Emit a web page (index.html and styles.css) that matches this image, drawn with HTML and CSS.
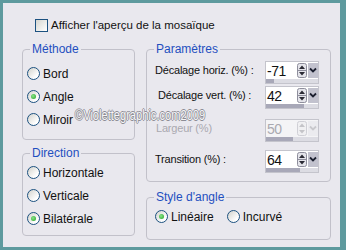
FILE: index.html
```html
<!DOCTYPE html>
<html lang="fr">
<head>
    <meta charset="utf-8">
    <title>Mosaïque</title>
    <link rel="stylesheet" href="styles.css">
</head>
<body>
<div class="dlg">
    <div class="preview"><span class="check"></span>Afficher l'aperçu de la mosaïque</div>

    <div class="cols">
        <div class="col">
            <fieldset class="box methode">
                <legend>Méthode</legend>
                <div class="opt"><span class="radio"></span>Bord</div>
                <div class="opt"><span class="radio on"></span>Angle</div>
                <div class="opt"><span class="radio"></span>Miroir</div>
            </fieldset>
            <fieldset class="box direction">
                <legend>Direction</legend>
                <div class="opt"><span class="radio"></span>Horizontale</div>
                <div class="opt"><span class="radio"></span>Verticale</div>
                <div class="opt"><span class="radio on"></span>Bilatérale</div>
            </fieldset>
        </div>

        <div class="col right">
            <fieldset class="box params">
                <legend>Paramètres</legend>
                <div class="row r1">
                    <span class="lbl">Décalage horiz. (%) :</span>
                    <div class="spin">
                        <div class="spin-top">
                            <span class="val">-71</span>
                            <svg class="ud" width="10" height="15" viewBox="0 0 10 15"><rect x="0.5" y="0.5" width="9" height="14" rx="2" fill="#e4e4ea" stroke="#8e8e9c"/><line x1="1" y1="7.5" x2="9" y2="7.5" stroke="#8e8e9c"/><path d="M2 6 L5 2.5 L8 6 Z" fill="#2a2a34"/><path d="M2 9 L5 12.5 L8 9 Z" fill="#2a2a34"/></svg>
                            <svg class="dd" width="10" height="15" viewBox="0 0 10 15"><rect width="10" height="15" fill="#c2c2ce"/><path d="M2 5.5 L5 8.5 L8 5.5" stroke="#1c2030" stroke-width="1.8" fill="none"/></svg>
                        </div>
                        <div class="bar"><div class="fill" style="width:15%"></div></div>
                    </div>
                </div>
                <div class="row r2">
                    <span class="lbl ind">Décalage vert. (%) :</span>
                    <div class="spin">
                        <div class="spin-top">
                            <span class="val">42</span>
                            <svg class="ud" width="10" height="15" viewBox="0 0 10 15"><rect x="0.5" y="0.5" width="9" height="14" rx="2" fill="#e4e4ea" stroke="#8e8e9c"/><line x1="1" y1="7.5" x2="9" y2="7.5" stroke="#8e8e9c"/><path d="M2 6 L5 2.5 L8 6 Z" fill="#2a2a34"/><path d="M2 9 L5 12.5 L8 9 Z" fill="#2a2a34"/></svg>
                            <svg class="dd" width="10" height="15" viewBox="0 0 10 15"><rect width="10" height="15" fill="#c2c2ce"/><path d="M2 5.5 L5 8.5 L8 5.5" stroke="#1c2030" stroke-width="1.8" fill="none"/></svg>
                        </div>
                        <div class="bar"><div class="fill" style="width:74%"></div></div>
                    </div>
                </div>
                <div class="row r3 off">
                    <span class="lbl ind2">Largeur (%)</span>
                    <div class="spin">
                        <div class="spin-top">
                            <span class="val">50</span>
                            <svg class="ud" width="10" height="15" viewBox="0 0 10 15"><rect x="0.5" y="0.5" width="9" height="14" rx="2" fill="#f0f0f2" stroke="#d0d0d6"/><path d="M2 6 L5 2.5 L8 6 Z" fill="#c4c4c8"/><path d="M2 9 L5 12.5 L8 9 Z" fill="#c4c4c8"/></svg>
                            <svg class="dd" width="10" height="15" viewBox="0 0 10 15"><rect width="10" height="15" fill="#ebebef"/><path d="M2 5.5 L5 8.5 L8 5.5" stroke="#c8c8cc" stroke-width="1.8" fill="none"/></svg>
                        </div>
                        <div class="bar"><div class="fill" style="width:52%"></div></div>
                    </div>
                </div>
                <div class="row r4">
                    <span class="lbl">Transition (%) :</span>
                    <div class="spin">
                        <div class="spin-top">
                            <span class="val">64</span>
                            <svg class="ud" width="10" height="15" viewBox="0 0 10 15"><rect x="0.5" y="0.5" width="9" height="14" rx="2" fill="#e4e4ea" stroke="#8e8e9c"/><line x1="1" y1="7.5" x2="9" y2="7.5" stroke="#8e8e9c"/><path d="M2 6 L5 2.5 L8 6 Z" fill="#2a2a34"/><path d="M2 9 L5 12.5 L8 9 Z" fill="#2a2a34"/></svg>
                            <svg class="dd" width="10" height="15" viewBox="0 0 10 15"><rect width="10" height="15" fill="#c2c2ce"/><path d="M2 5.5 L5 8.5 L8 5.5" stroke="#1c2030" stroke-width="1.8" fill="none"/></svg>
                        </div>
                        <div class="bar"><div class="fill" style="width:65%"></div></div>
                    </div>
                </div>
            </fieldset>
            <fieldset class="box style">
                <legend>Style d'angle</legend>
                <div class="inline">
                    <div class="opt"><span class="radio on"></span>Linéaire</div>
                    <div class="opt"><span class="radio"></span>Incurvé</div>
                </div>
            </fieldset>
        </div>
    </div>

    <div class="mark">©Violettegraphic.com2009</div>
</div>
</body>
</html>
```

FILE: styles.css
```css
body {
    margin: 0;
    padding: 0;
    font-family: 'Liberation Sans', Arial, sans-serif;
    font-size: 12px;
    color: #111;
}
.dlg {
    position: relative;
    width: 346px;
    height: 250px;
    box-sizing: border-box;
    border: solid #5e9a9e;
    border-width: 3px 6px 3px 3px;
    background: #e9e8ee;
    padding: 15px 9px 0 19px;
}
.preview {
    display: flex;
    align-items: center;
    height: 14px;
    margin-bottom: 10px;
    font-size: 11.5px;
}
.check {
    width: 13px;
    height: 13px;
    box-sizing: border-box;
    border: 1px solid #1c5180;
    background: linear-gradient(135deg, #d6d6d0, #fff);
    margin: 0 3px 0 13px;
}
.cols {
    display: grid;
    grid-template-columns: 113px 185px;
    column-gap: 11px;
}
.col {
    display: flex;
    flex-direction: column;
    gap: 6px;
}
.col.right {
    gap: 8px;
}
.box {
    margin: 0;
    min-width: 0;
    border: 1px solid #c2c1ca;
    border-radius: 4px;
    padding: 0 4px;
}
.box legend {
    color: #1f4fc0;
    line-height: 14px;
    padding: 0 2px;
    margin-left: 3px;
}
.methode {
    padding-top: 6px;
    padding-bottom: 8px;
}
.direction {
    padding-top: 1px;
    padding-bottom: 5px;
}
.opt {
    display: flex;
    align-items: center;
    height: 23px;
}
.radio {
    position: relative;
    width: 13px;
    height: 13px;
    box-sizing: border-box;
    border: 1px solid #1c5180;
    border-radius: 50%;
    background: linear-gradient(135deg, #d2d2cc, #fff 75%);
    margin-right: 3px;
}
.radio.on::after {
    content: '';
    position: absolute;
    left: 3px;
    top: 3px;
    width: 5px;
    height: 5px;
    border-radius: 50%;
    background: radial-gradient(circle at 40% 40%, #8ae48a, #21a121);
}

/* Paramètres */
.params {
    padding-top: 5px;
    padding-bottom: 8px;
}
.row {
    display: flex;
    align-items: flex-start;
    padding-left: 4px;
}
.r2 { margin-top: 2px; }
.r3 { margin-top: 10px; }
.r4 { margin-top: 8px; }
.lbl {
    width: 110px;
    line-height: 18px;
    white-space: nowrap;
    font-size: 11px;
    letter-spacing: -0.2px;
}
.lbl.ind {
    padding-left: 3px;
    width: 107px;
}
.lbl.ind2 {
    padding-left: 1px;
    width: 109px;
}
.off .lbl,
.off .val {
    color: #a9a9b0;
}
.spin {
    width: 54px;
    border: 1px solid #c4c4cc;
    box-sizing: border-box;
}
.spin-top {
    display: flex;
    align-items: center;
    height: 17px;
    background: #fff;
}
.off .spin-top {
    background: #f4f4f6;
}
.val {
    flex: 1;
    padding-left: 1px;
    font-size: 14px;
    letter-spacing: -0.5px;
}
.ud {
    margin-right: 1px;
}
.bar {
    height: 4px;
    background: #dcdce3;
}
.fill {
    height: 100%;
    background: #a8a8b8;
}

/* Style d'angle */
.style {
    padding-top: 5px;
    padding-bottom: 15px;
}
.inline {
    display: flex;
    padding-left: 4px;
}
.inline .opt {
    height: 15px;
    margin-right: 13px;
}

.mark {
    position: absolute;
    left: 72px;
    top: 103px;
    font-size: 15px;
    line-height: 17px;
    color: #f6f6f8;
    transform: scaleX(0.74);
    transform-origin: left top;
    text-shadow: 1px 0 0 #8c8c94, -1px 0 0 #8c8c94, 0 1px 0 #8c8c94, 0 -1px 0 #8c8c94;
}
```
